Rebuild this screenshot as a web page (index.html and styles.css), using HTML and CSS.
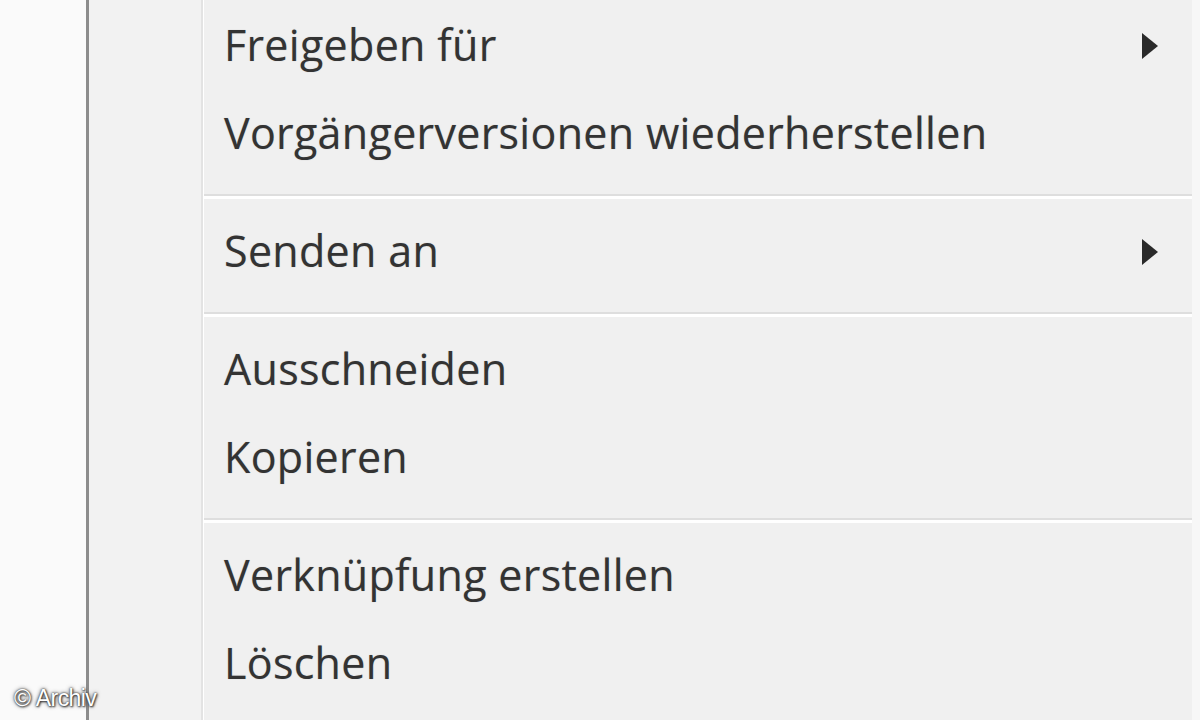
FILE: index.html
```html
<!DOCTYPE html>
<html lang="de">
<head>
<meta charset="utf-8">
<title>Kontextmenü</title>
<link rel="stylesheet" href="styles.css">
</head>
<body>
<div class="screen">
  <div class="desk">
    <span class="credit">© Archiv</span>
  </div>
  <div class="menu">
    <div class="gutter"></div>
    <div class="items">
      <div class="item"><span class="label">Freigeben für</span><span class="arrow"></span></div>
      <div class="item"><span class="label">Vorgängerversionen wiederherstellen</span></div>
      <div class="sep"></div>
      <div class="item"><span class="label">Senden an</span><span class="arrow"></span></div>
      <div class="sep"></div>
      <div class="item"><span class="label">Ausschneiden</span></div>
      <div class="item"><span class="label">Kopieren</span></div>
      <div class="sep"></div>
      <div class="item"><span class="label">Verknüpfung erstellen</span></div>
      <div class="item"><span class="label">Löschen</span></div>
    </div>
    <div class="edge"></div>
  </div>
</div>
</body>
</html>
```
FILE: styles.css
```css
html, body {
  margin: 0;
  padding: 0;
  width: 1200px;
  height: 720px;
  overflow: hidden;
  background: #fbfbfb;
}

.screen {
  display: flex;
  width: 1200px;
  height: 720px;
}

.desk {
  width: 86px;
  flex: none;
  position: relative;
  background: #fafafa;
}

.credit {
  position: absolute;
  left: 14px;
  bottom: 8px;
  font-family: "Liberation Sans", Arial, sans-serif;
  font-size: 23px;
  letter-spacing: -0.6px;
  word-spacing: 1px;
  color: #ffffff;
  text-shadow: 0 0 2px #222, 0 0 4px #555, 1px 1px 2px #444;
  white-space: nowrap;
  z-index: 2;
}

.menu {
  flex: 1;
  display: flex;
  border-left: 3px solid #8c8c8c;
  background: #f1f1f1;
}

.gutter {
  width: 112px;
  flex: none;
  background: #f2f2f2;
  border-right: 2px solid #e3e3e3;
  box-shadow: 1px 0 0 #ffffff;
}

.items {
  flex: 1;
  padding-top: 4px;
  background: #f0f0f0;
  margin-left: 1px;
}

.item {
  height: 88px;
  display: flex;
  align-items: center;
  justify-content: space-between;
  padding-left: 20px;
  padding-right: 34px;
}

.label {
  font-family: "Open Sans", "DejaVu Sans", sans-serif;
  font-size: 43px;
  color: #333333;
  white-space: nowrap;
  letter-spacing: 0.3px;
  margin-top: -8px;
  text-shadow: 0 0 1px rgba(60, 60, 60, 0.35);
}

.arrow {
  width: 0;
  height: 0;
  border-top: 13px solid transparent;
  border-bottom: 13px solid transparent;
  border-left: 16px solid #2a2a2a;
  margin-top: -4px;
}

.sep {
  height: 30px;
  display: flex;
  flex-direction: column;
  justify-content: center;
}

.sep::before {
  content: "";
  display: block;
  height: 2px;
  background: #dedede;
  border-bottom: 3px solid #ffffff;
  margin-top: 2px;
}

.edge {
  width: 8px;
  flex: none;
  background: #f7f7f7;
}
```
